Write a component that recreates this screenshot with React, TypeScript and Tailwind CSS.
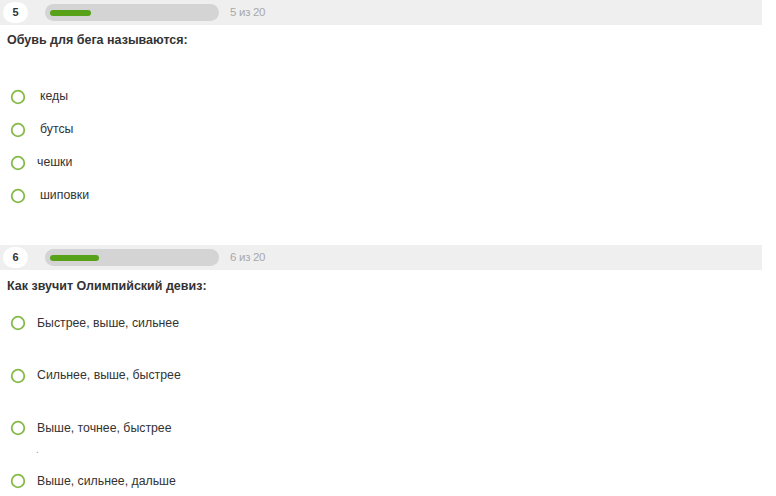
import React from 'react'

interface Question {
    num: number
    fill: number
    title: string
    options: { text: string, indent: number }[]
}

function Circle() {
    return (
        <svg width="16" height="16" viewBox="0 0 16 16" className="shrink-0">
            <circle cx="8" cy="8" r="6.3" fill="none" stroke="#86bb4a" strokeWidth="1.8" />
        </svg>
    )
}

function Header({ num, fill }: { num: number, fill: number }) {
    return (
        <div className="w-[762px] h-[25px] bg-[#efefef] flex items-center">
            <div className="ml-[3px] w-[25px] h-[21px] rounded-full bg-white flex items-center justify-center text-[11px] font-bold text-[#333]">
                {num}
            </div>
            <div className="ml-[17px] w-[174px] h-[17px] rounded-full bg-[#d4d4d4] flex items-center">
                <div className="ml-[5px] h-[6px] rounded-full bg-[#58a21a]" style={{ width: fill }} />
            </div>
            <span className="ml-[11px] text-[11.5px] text-[#a9a9a9] tracking-[-0.3px]">{num} из 20</span>
        </div>
    )
}

function App() {
    const q1: Question = {
        num: 5, fill: 41, title: 'Обувь для бега называются:',
        options: [
            { text: 'кеды', indent: 14 },
            { text: 'бутсы', indent: 14 },
            { text: 'чешки', indent: 11 },
            { text: 'шиповки', indent: 14 },
        ]
    }
    const q2 = [
        'Быстрее, выше, сильнее',
        'Сильнее, выше, быстрее',
        'Выше, точнее, быстрее',
        'Выше, сильнее, дальше',
    ]

    return (
        <div className="w-[776px] h-[496px] bg-white overflow-hidden" style={{ fontFamily: '"Liberation Sans", Arial, sans-serif' }}>
            <Header num={q1.num} fill={q1.fill} />
            <div className="pl-[7px] pt-[8px] h-[55px] text-[12.5px] font-bold text-[#333] leading-[14px]">{q1.title}</div>
            <div className="flex flex-col">
                {q1.options.map((o) => (
                    <div key={o.text} className="h-[33px] flex items-center pl-[10px]">
                        <Circle />
                        <span className="text-[12.3px] text-[#333]" style={{ marginLeft: o.indent }}>{o.text}</span>
                    </div>
                ))}
            </div>
            <div className="h-[33px]" />
            <Header num={6} fill={49} />
            <div className="pl-[7px] pt-[9px] h-[23px] text-[12.5px] font-bold text-[#333] leading-[14px]">Как звучит Олимпийский девиз:</div>
            <div className="flex flex-col">
                {q2.map((t, i) => (
                    <div key={t} className="h-[52.7px] pt-[22px] pl-[10px] flex flex-col">
                        <div className="h-[16px] flex items-center">
                            <Circle />
                            <span className="ml-[11px] text-[12.3px] text-[#333]">{t}</span>
                        </div>
                        {i === 2 && <span className="ml-[26px] mt-[9px] text-[10px] leading-[10px] text-[#999]">.</span>}
                    </div>
                ))}
            </div>
        </div>
    )
}

export default App
